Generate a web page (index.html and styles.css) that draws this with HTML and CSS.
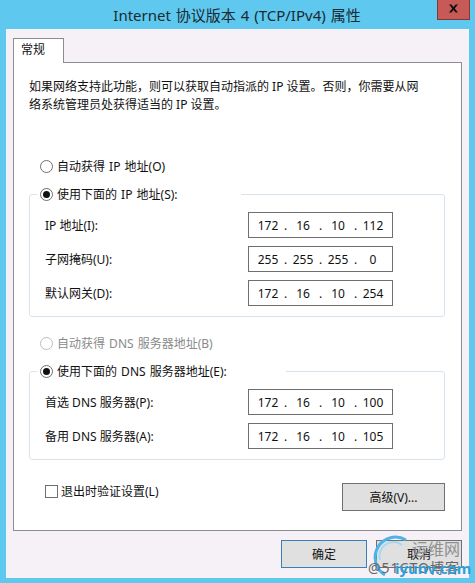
FILE: index.html
```html
<!DOCTYPE html>
<html lang="zh-CN">
<head>
  <meta charset="UTF-8">
  <title>Internet 协议版本 4 (TCP/IPv4) 属性</title>
  <link rel="stylesheet" href="styles.css">
</head>
<body>
  <div class="window">
    <div class="titlebar">
      <div class="title">Internet 协议版本 4 (TCP/IPv4) 属性</div>
      <div class="close"><svg width="11" height="9" viewBox="0 0 12 10"><path d="M1 0.5h2.6L6 3.2 8.4 0.5H11L7.4 5 11 9.5H8.4L6 6.8 3.6 9.5H1L4.6 5z" fill="#111"/></svg></div>
    </div>
    <div class="client">
      <div class="tabs"><div class="tab">常规</div></div>
      <div class="panel">
        <p class="intro">如果网络支持此功能，则可以获取自动指派的 IP 设置。否则，你需要从网<br>络系统管理员处获得适当的 IP 设置。</p>

        <div class="radio-row first"><span class="radio"></span>自动获得 IP 地址(O)</div>
        <div class="group">
          <div class="legend"><span class="radio on"></span>使用下面的 IP 地址(S):</div>
          <div class="field"><span>IP 地址(I):</span>
            <div class="ip"><span>172</span><i>.</i><span>16</span><i>.</i><span>10</span><i>.</i><span>112</span></div></div>
          <div class="field"><span>子网掩码(U):</span>
            <div class="ip"><span>255</span><i>.</i><span>255</span><i>.</i><span>255</span><i>.</i><span>0</span></div></div>
          <div class="field"><span>默认网关(D):</span>
            <div class="ip"><span>172</span><i>.</i><span>16</span><i>.</i><span>10</span><i>.</i><span>254</span></div></div>
        </div>

        <div class="radio-row disabled"><span class="radio"></span>自动获得 DNS 服务器地址(B)</div>
        <div class="group dns">
          <div class="legend"><span class="radio on"></span>使用下面的 DNS 服务器地址(E):</div>
          <div class="field"><span>首选 DNS 服务器(P):</span>
            <div class="ip"><span>172</span><i>.</i><span>16</span><i>.</i><span>10</span><i>.</i><span>100</span></div></div>
          <div class="field"><span>备用 DNS 服务器(A):</span>
            <div class="ip"><span>172</span><i>.</i><span>16</span><i>.</i><span>10</span><i>.</i><span>105</span></div></div>
        </div>

        <div class="bottom-row">
          <label class="check"><span class="box"></span>退出时验证设置(L)</label>
          <button class="btn advanced">高级(V)...</button>
        </div>
      </div>
      <div class="actions">
        <button class="btn default">确定</button>
        <button class="btn">取消</button>
      </div>
    </div>
    <!-- site watermark over the corner -->
    <div class="watermark">
      <svg class="wm-ring" width="50" height="50" viewBox="0 0 50 50"><path d="M36 7A20 20 0 1 0 15 42" fill="none" stroke="#4db3e8" stroke-width="3"/><path d="M32 12A14 14 0 0 0 10 27" fill="none" stroke="#a5d9f3" stroke-width="2"/></svg>
      <span class="wm-cn">运维网</span>
      <span class="wm-51">@51CTO博客</span>
      <span class="wm-site">iyunv.com</span>
    </div>
  </div>
</body>
</html>
```

FILE: styles.css
```css
html, body {
  margin: 0;
  padding: 0;
}
body {
  width: 475px;
  height: 583px;
  overflow: hidden;
  font-family: "Noto Sans", "Noto Sans CJK SC", sans-serif;
  font-size: 12px;
  color: #111;
  background-color: #5fc8ee;
}
.window {
  position: relative;
  height: 583px;
  padding: 0 6px 5px;
  box-sizing: border-box;
  display: flex;
  flex-direction: column;
}
.titlebar {
  height: 29px;
  flex: none;
  position: relative;
  display: flex;
  justify-content: center;
  align-items: center;
}
.title {
  font-size: 15px;
  word-spacing: 1px;
  color: #1a2a33;
  padding: 0 1px 1px 0;
}
.close {
  position: absolute;
  right: -1px;
  top: 0;
  width: 33px;
  height: 20px;
  box-sizing: border-box;
  padding-bottom: 2px;
  background-color: #c75a56;
  border: 1px solid #7c3a38;
  border-top: none;
  display: flex;
  justify-content: center;
  align-items: center;
}
.client {
  flex: 1;
  background-color: #f5f1f6;
  padding: 9px 7px 0;
}
.tabs {
  display: flex;
  height: 24px;
}
.tab {
  width: 51px;
  height: 25px;
  box-sizing: border-box;
  background-color: white;
  border: 1px solid #8b8d93;
  border-bottom: none;
  padding: 2px 0 0 7px;
  font-size: 12px;
  line-height: 18px;
  position: relative;
  z-index: 1;
}
.panel {
  height: 469px;
  box-sizing: border-box;
  background-color: white;
  border: 1px solid #8b8d93;
  padding: 15px 15px 0;
}
.intro {
  margin: 0;
  font-size: 12px;
  line-height: 18px;
  height: 36px;
}
.radio-row, .legend {
  display: flex;
  align-items: center;
  height: 18px;
  gap: 4px;
  word-spacing: 1px;
}
.radio-row {
  margin-left: 11px;
}
.radio-row.first {
  margin-top: 43px;
}
.radio-row.disabled {
  color: #8a8a8a;
  margin-top: 17px;
}
.radio-row.disabled .radio {
  border-color: #bdbdbd;
}
.radio {
  width: 13px;
  height: 13px;
  flex: none;
  box-sizing: border-box;
  border: 1px solid #6f6f6f;
  border-radius: 50%;
  background-color: white;
  display: flex;
  justify-content: center;
  align-items: center;
}
.radio.on::after {
  content: "";
  width: 7px;
  height: 7px;
  border-radius: 50%;
  background-color: #111;
}
.group {
  margin: 19px 1px 0 0;
  height: 123px;
  box-sizing: border-box;
  border: 1px solid #d9e3ec;
  border-radius: 3px;
  padding: 0 51px 0 15px;
}
.group.dns {
  height: 89px;
}
.legend {
  margin: -10px 0 0 -8px;
  padding: 0 63px 0 3px;
  width: fit-content;
  background-color: white;
}
.group.dns .legend {
  padding-right: 59px;
}
.field {
  display: flex;
  justify-content: space-between;
  align-items: center;
  height: 26px;
  margin-top: 8px;
}
.legend + .field {
  margin-top: 9px;
}
.ip {
  width: 145px;
  height: 26px;
  box-sizing: border-box;
  border: 1px solid #6f6f6f;
  display: flex;
  align-items: center;
  padding: 0 5px 0 8px;
  font-size: 12px;
}
.ip span {
  width: 22px;
  text-align: center;
}
.ip i {
  font-style: normal;
  width: 13px;
  text-align: center;
}
.bottom-row {
  display: flex;
  justify-content: space-between;
  align-items: flex-start;
  margin: 23px 1px 0 0;
}
.check {
  display: flex;
  align-items: center;
  gap: 3px;
  margin-left: 16px;
  margin-top: -1px;
}
.box {
  width: 13px;
  height: 13px;
  box-sizing: border-box;
  border: 1px solid #6f6f6f;
  background-color: white;
}
.btn {
  width: 86px;
  height: 28px;
  padding: 0;
  background-color: #e0e0e0;
  border: 1px solid #707070;
  font-family: inherit;
  font-size: 12px;
  color: #111;
}
.advanced {
  width: 103px;
}
.actions {
  display: flex;
  justify-content: flex-end;
  gap: 9px;
  margin-top: 9px;
}
.default {
  border-color: #3a80b8;
}
.watermark {
  position: absolute;
  left: 370px;
  top: 533px;
  width: 105px;
  height: 50px;
}
.wm-ring {
  position: absolute;
  left: 0;
  top: 0;
}
.watermark span {
  position: absolute;
  white-space: nowrap;
  line-height: 16px;
}
.wm-cn {
  left: 42px;
  top: 8px;
  font-size: 16px;
  color: #8f8f8f;
}
.wm-51 {
  left: -2px;
  top: 27px;
  font-size: 14px;
  letter-spacing: 1px;
  color: #666;
}
.wm-site {
  left: 25px;
  top: 27px;
  font-size: 15px;
  font-weight: 700;
  color: #2f9fd8;
}
```
